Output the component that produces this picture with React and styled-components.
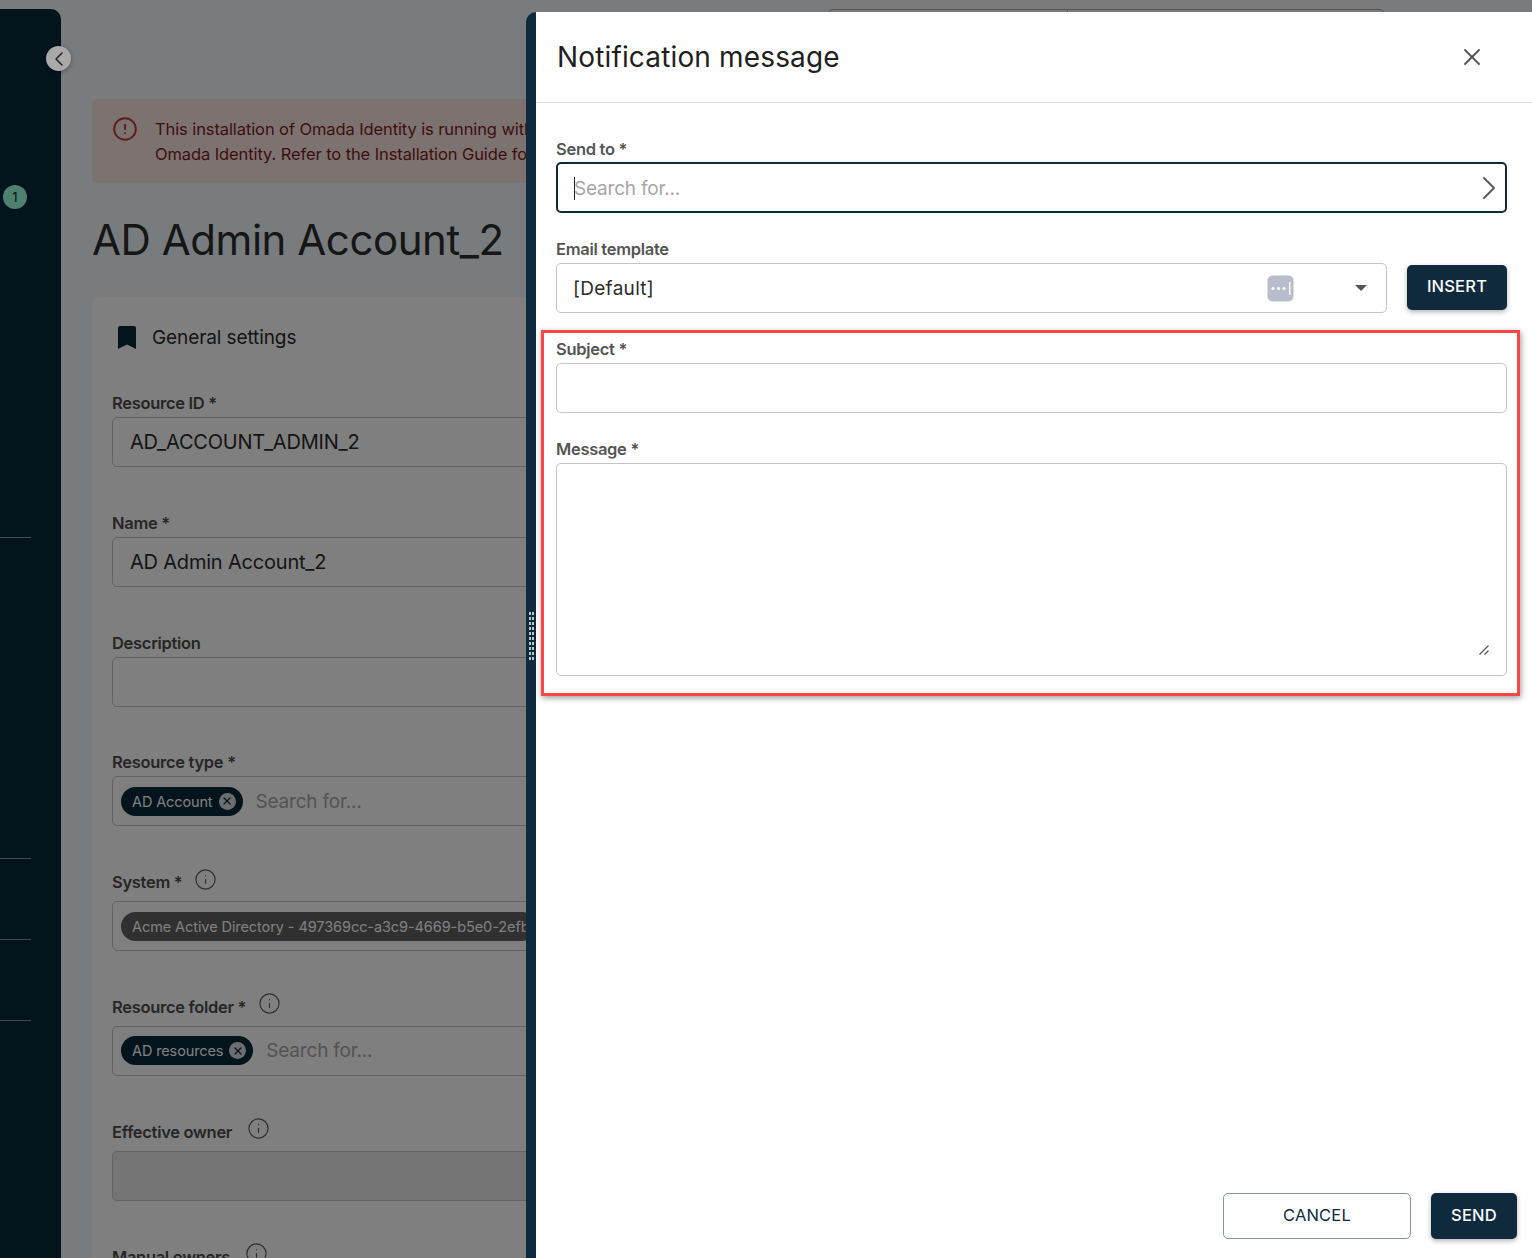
import React from 'react'
import styled, { createGlobalStyle } from 'styled-components'
import { ChevronLeft, ChevronRight, CircleAlert, Info, X } from 'lucide-react'

const GlobalStyle = createGlobalStyle`
    html, body {
        margin: 0;
        height: 1258px;
        overflow: hidden;
        background: #f0f9ff;
        font-family: Inter, "Open Sans", sans-serif;
        color: #333;
    }
    * { box-sizing: border-box; }
`

const Page = styled.div`
    display: flex;
    height: 1258px;
    overflow: hidden;
    padding-top: 9px;
`

const Sidebar = styled.aside`
    position: relative;
    flex: 0 0 61px;
    height: 1260px;
    background: #06283a;
    border-radius: 0 10px 10px 0;
`

const SideBadge = styled.span`
    position: absolute;
    left: 3px;
    top: 176px;
    width: 24px;
    height: 24px;
    border-radius: 50%;
    background: #9effde;
    color: #06283a;
    font-size: 13px;
    display: flex;
    align-items: center;
    justify-content: center;
`

const SideRule = styled.hr`
    position: absolute;
    left: 0;
    width: 31px;
    margin: 0;
    border: 0;
    border-top: 1px solid #8b9ba6;
    top: ${p => p.$top}px;
`

const Collapse = styled.button`
    position: absolute;
    z-index: 2;
    left: 46px;
    top: 37px;
    width: 25px;
    height: 25px;
    border-radius: 50%;
    border: 0;
    padding: 0;
    background: #a9a9a9;
    color: #222;
    display: flex;
    align-items: center;
    justify-content: center;
    box-shadow: 0 1px 4px rgba(0, 0, 0, .35);
`

const Main = styled.main`
    flex: 1;
    min-width: 0;
    padding: 90px 0 0 31px;
`

const TopTabs = styled.div`
    position: absolute;
    left: 828px;
    top: 9px;
    width: 557px;
    height: 20px;
    border: 1px solid #aaa;
    border-radius: 5px 5px 0 0;
    background: #f4f4f4;
    &::after {
        content: '';
        position: absolute;
        left: 238px;
        top: 0;
        height: 100%;
        border-left: 1px solid #aaa;
    }
`

const Alert = styled.div`
    display: flex;
    gap: 17px;
    width: 1300px;
    height: 84px;
    padding: 18px 20px;
    background: #f9e6e3;
    border-radius: 4px;
    color: #7c1d20;
    font-size: 16.5px;
    line-height: 25px;
    letter-spacing: -0.1px;
    white-space: nowrap;
    svg { color: #c9383c; margin-top: -1px; flex: none; }
`

const PageTitle = styled.h1`
    margin: 30px 0 30px;
    height: 54px;
    font-size: 42px;
    line-height: 54px;
    font-weight: 400;
    color: #2c2c2c;
    letter-spacing: -0.45px;
    white-space: nowrap;
`

const Card = styled.section`
    width: 1300px;
    background: #fff;
    border-radius: 6px 6px 0 0;
    padding: 26px 20px 0;
`

const CardHead = styled.div`
    display: flex;
    align-items: center;
    gap: 16px;
    height: 28px;
    margin-bottom: 42px;
    padding-left: 6px;
    font-size: 19px;
    letter-spacing: -0.1px;
    color: #2a2a2a;
    svg { color: #06283a; }
`

const FieldWrap = styled.div`
    margin-bottom: 45.8px;
`

const LabelRow = styled.div`
    display: flex;
    align-items: center;
    gap: ${p => p.$iconGap ?? 12}px;
    height: ${p => (p.$info ? 29 : 24)}px;
    padding-bottom: ${p => (p.$info ? 9 : 4)}px;
    svg { color: #5c5c5c; margin-top: -6px; }
`

const Label = styled.label`
    font-size: 16.5px;
    font-weight: 600;
    color: #4d4d4d;
    letter-spacing: -0.3px;
    white-space: nowrap;
`

const Box = styled.div`
    display: flex;
    align-items: center;
    height: 50px;
    padding: 0 8px;
    gap: 13px;
    border: 1px solid #c4c4c4;
    border-radius: 5px;
    background: ${p => (p.$disabled ? '#eaeaea' : '#fff')};
    font-size: 19px;
    color: #2b2b2b;
    white-space: nowrap;
    overflow: hidden;
`

const BoxText = styled.span`
    padding-left: 9px;
    font-size: 20px;
    letter-spacing: -0.2px;
`

const Placeholder = styled.span`
    font-size: 19px;
    color: #a6a6a6;
    letter-spacing: -0.2px;
`

const Chip = styled.span`
    display: inline-flex;
    align-items: center;
    gap: 6px;
    height: 29px;
    flex: none;
    padding: 0 7px 0 11px;
    border-radius: 15px;
    background: ${p => (p.$disabled ? '#606060' : '#06283a')};
    color: #fff;
    font-size: 14.5px;
    letter-spacing: ${p => (p.$disabled ? '-0.08px' : '-0.12px')};
`

const ChipClose = styled.span`
    width: 17px;
    height: 17px;
    border-radius: 50%;
    background: #d8dde0;
    color: #06283a;
    display: flex;
    align-items: center;
    justify-content: center;
`

const Backdrop = styled.div`
    position: fixed;
    z-index: 1;
    inset: 0;
    background: rgba(0, 0, 0, .5);
`

const Drawer = styled.aside`
    position: fixed;
    z-index: 3;
    left: 526px;
    top: 12px;
    width: 1006px;
    height: 1246px;
    display: flex;
    flex-direction: column;
    background: #fff;
    border-left: 10px solid #0f2a3d;
    border-top-left-radius: 10px;
`

const DragHandle = styled.span`
    position: absolute;
    left: -7px;
    top: 600px;
    width: 5px;
    height: 48px;
    background: repeating-linear-gradient(to bottom, #b9c4cc 0 3px, transparent 3px 5px);
    -webkit-mask: linear-gradient(to right, #000 0 2px, transparent 2px 3px, #000 3px 5px);
`

const DrawerHead = styled.header`
    flex: none;
    display: flex;
    align-items: center;
    justify-content: space-between;
    height: 91px;
    padding: 0 46px 0 21px;
    border-bottom: 1px solid #e3e3e3;
`

const DrawerTitle = styled.h2`
    margin: 0;
    font-size: 28px;
    font-weight: 400;
    color: #1f1f1f;
    letter-spacing: 0.15px;
`

const CloseButton = styled.button`
    border: 0;
    background: none;
    padding: 0;
    display: flex;
    color: #555;
`

const DrawerBody = styled.div`
    flex: 1;
    padding: 34px 25px 0 20px;
`

const FormField = styled.div`
    margin-bottom: ${p => p.$gap ?? 24}px;
`

const FormLabel = styled(Label)`
    display: block;
    height: 26px;
    line-height: 24px;
    color: #555;
`

const SearchBox = styled(Box)`
    height: 51px;
    margin-top: -1px;
    padding: 0 9px 0 16px;
    border: 2px solid #0f2a3d;
    justify-content: space-between;
    svg { color: #5c5c5c; margin-right: -13px; }
`

const CaretText = styled.span`
    display: flex;
    align-items: center;
    margin-top: 1px;
`

const TextCaret = styled.i`
    display: block;
    width: 1px;
    height: 23px;
    margin-right: -1px;
    background: #222;
`

const TemplateRow = styled.div`
    display: flex;
    align-items: center;
    gap: 20px;
`

const TemplateBox = styled(Box)`
    flex: 1;
    padding: 0 19px 0 16px;
    gap: 12px;
`

const TemplateValue = styled.span`
    flex: 1;
    letter-spacing: 0.3px;
`

const DropArrow = styled.span`
    margin-left: 49px;
    border-left: 6px solid transparent;
    border-right: 6px solid transparent;
    border-top: 6px solid #555;
`

const PrimaryButton = styled.button`
    height: ${p => p.$h ?? 45}px;
    width: ${p => p.$w}px;
    flex: none;
    margin-bottom: ${p => p.$lift ?? 0}px;
    padding: 0 0 3px;
    border: 0;
    border-radius: 5px;
    background: #0f2a3d;
    color: #fff;
    font: 500 16.5px Inter, sans-serif;
    letter-spacing: 0.2px;
    box-shadow: 0 2px 5px rgba(0, 0, 0, .3);
`

const Highlight = styled.div`
    margin: -5px -13px 0 -15px;
    padding: 4px 10px 0 12px;
    height: 366px;
    border: 3px solid #fa4646;
    box-shadow: 1px 2px 6px rgba(0, 0, 0, .4);
`

const MessageArea = styled.div`
    position: relative;
    height: 213px;
    border: 1px solid #c4c4c4;
    border-radius: 5px;
    svg { position: absolute; right: 16px; bottom: 19px; }
`

const DrawerFoot = styled.footer`
    flex: none;
    display: flex;
    justify-content: flex-end;
    gap: 20px;
    padding: 0 15px 19px 0;
`

const OutlineButton = styled.button`
    width: 188px;
    height: 46px;
    padding: 0 0 3px;
    border: 1px solid #8595a1;
    border-radius: 5px;
    background: #fff;
    color: #0f2a3d;
    font: 400 16.5px Inter, sans-serif;
    letter-spacing: 0.2px;
`

const RemoveChip = () => (
    <ChipClose><X size={12} strokeWidth={2.5} /></ChipClose>
)

const Field = ({ label, info, iconGap, children }) => (
    <FieldWrap>
        <LabelRow $info={info} $iconGap={iconGap}>
            <Label>{label}</Label>
            {info && <Info size={23} strokeWidth={1.2} />}
        </LabelRow>
        {children}
    </FieldWrap>
)

const BookmarkIcon = () => (
    <svg width="18" height="23" viewBox="0 0 18 23">
        <path d="M2 0 H16 a2 2 0 0 1 2 2 V23 L9 18.5 L0 23 V2 a2 2 0 0 1 2-2z" fill="currentColor" />
    </svg>
)

const TemplateIcon = () => (
    <svg width="27" height="27" viewBox="0 0 27 27">
        <rect x="0.5" y="0.5" width="26" height="26" rx="5" fill="#b9bdcb" />
        <circle cx="6" cy="13.5" r="1.6" fill="#fff" />
        <circle cx="11.5" cy="13.5" r="1.6" fill="#fff" />
        <circle cx="17" cy="13.5" r="1.6" fill="#fff" />
        <rect x="22" y="7" width="1.4" height="13" fill="#fff" />
    </svg>
)

const ResizeGrip = () => (
    <svg width="12" height="12" viewBox="0 0 12 12">
        <path d="M1.5 10.5 L10.5 1.5 M6.5 10.5 L10.5 6.5" stroke="#555" strokeWidth="1.2" fill="none" />
    </svg>
)

const App = () => {
    return (
        <>
            <GlobalStyle />
            <Page>
                <Sidebar>
                    <Collapse><ChevronLeft size={24} strokeWidth={1.5} /></Collapse>
                    <SideBadge>1</SideBadge>
                    <SideRule $top={528} />
                    <SideRule $top={849} />
                    <SideRule $top={930} />
                    <SideRule $top={1011} />
                </Sidebar>
                <Main>
                    <Alert>
                        <CircleAlert size={26} strokeWidth={1.8} />
                        <div>
                            This installation of Omada Identity is running with<br />
                            Omada Identity. Refer to the Installation Guide for
                        </div>
                    </Alert>
                    <PageTitle>AD Admin Account_2</PageTitle>
                    <Card>
                        <CardHead>
                            <BookmarkIcon />
                            General settings
                        </CardHead>
                        <Field label="Resource ID *">
                            <Box><BoxText>AD_ACCOUNT_ADMIN_2</BoxText></Box>
                        </Field>
                        <Field label="Name *">
                            <Box><BoxText>AD Admin Account_2</BoxText></Box>
                        </Field>
                        <Field label="Description">
                            <Box />
                        </Field>
                        <Field label="Resource type *">
                            <Box>
                                <Chip>AD Account <RemoveChip /></Chip>
                                <Placeholder>Search for...</Placeholder>
                            </Box>
                        </Field>
                        <Field label="System *" info>
                            <Box>
                                <Chip $disabled>Acme Active Directory - 497369cc-a3c9-4669-b5e0-2efb</Chip>
                            </Box>
                        </Field>
                        <Field label="Resource folder *" info>
                            <Box>
                                <Chip>AD resources <RemoveChip /></Chip>
                                <Placeholder>Search for...</Placeholder>
                            </Box>
                        </Field>
                        <Field label="Effective owner" info iconGap={15}>
                            <Box $disabled />
                        </Field>
                        <Field label="Manual owners" info iconGap={15}>
                            <Box />
                        </Field>
                    </Card>
                </Main>
            </Page>
            <TopTabs />
            <Backdrop />
            <Drawer>
                <DragHandle />
                <DrawerHead>
                    <DrawerTitle>Notification message</DrawerTitle>
                    <CloseButton><X size={28} strokeWidth={1.6} /></CloseButton>
                </DrawerHead>
                <DrawerBody>
                    <FormField>
                        <FormLabel>Send to *</FormLabel>
                        <SearchBox>
                            <CaretText><TextCaret /><Placeholder>Search for...</Placeholder></CaretText>
                            <ChevronRight size={40} strokeWidth={1.2} />
                        </SearchBox>
                    </FormField>
                    <FormField $gap={22}>
                        <FormLabel>Email template</FormLabel>
                        <TemplateRow>
                            <TemplateBox>
                                <TemplateValue>[Default]</TemplateValue>
                                <TemplateIcon />
                                <DropArrow />
                            </TemplateBox>
                            <PrimaryButton $w={100} $lift={2}>INSERT</PrimaryButton>
                        </TemplateRow>
                    </FormField>
                    <Highlight>
                        <FormField>
                            <FormLabel>Subject *</FormLabel>
                            <Box />
                        </FormField>
                        <FormField $gap={0}>
                            <FormLabel>Message *</FormLabel>
                            <MessageArea><ResizeGrip /></MessageArea>
                        </FormField>
                    </Highlight>
                </DrawerBody>
                <DrawerFoot>
                    <OutlineButton>CANCEL</OutlineButton>
                    <PrimaryButton $w={86} $h={46}>SEND</PrimaryButton>
                </DrawerFoot>
            </Drawer>
        </>
    )
}

export default App
